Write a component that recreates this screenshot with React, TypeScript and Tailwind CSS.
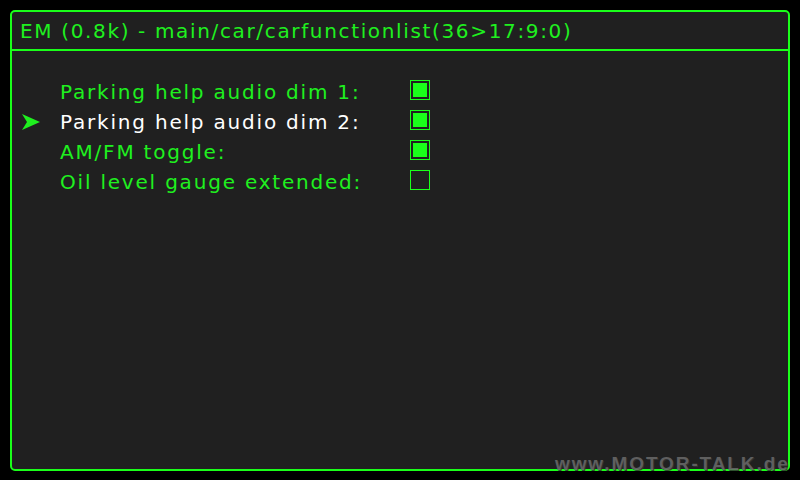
const items = [
  { label: "Parking help audio dim 1:", checked: true },
  { label: "Parking help audio dim 2:", checked: true, selected: true },
  { label: "AM/FM toggle:", checked: true },
  { label: "Oil level gauge extended:", checked: false },
];

const Arrow = () => (
  <svg width="18" height="16" viewBox="0 0 18 16">
    <path d="M0 0 L18 8 L0 16 L5 8 Z" fill="#1ff01f" />
  </svg>
);

const App = () => {
  return (
    <div
      className="relative w-[800px] h-[480px] bg-black p-[10px]"
      style={{ fontFamily: '"DejaVu Sans", sans-serif' }}
    >
      <div className="flex flex-col h-[461px] rounded-[5px] border-2 border-[#1aff1a] bg-[#202020]">
        <div className="h-[39px] flex items-center pl-[8px] border-b-2 border-[#1aff1a] text-[20px] text-[#1ff01f] tracking-[1.65px]">
          EM (0.8k) - main/car/carfunctionlist(36&gt;17:9:0)
        </div>

        <div className="pt-[24px] flex flex-col">
          {items.map((item) => (
            <div key={item.label} className="flex items-center h-[30px]">
              <div className="w-[48px] pl-[10px] pt-[4px] flex items-center">
                {item.selected && <Arrow />}
              </div>
              <div
                className={
                  item.selected
                    ? "w-[350px] pt-[4px] text-[20px] text-white tracking-[1.8px]"
                    : "w-[350px] pt-[4px] text-[20px] text-[#1ff01f] tracking-[1.8px]"
                }
              >
                {item.label}
              </div>
              <div className="w-5 h-5 border border-[#1aff1a] p-[2px]">
                {item.checked && <div className="w-full h-full bg-[#1aff1a]" />}
              </div>
            </div>
          ))}
        </div>
      </div>

      <div
        className="absolute left-[555px] top-[452px] text-[19px] font-bold text-[#6a6a6a] opacity-85 tracking-[1.9px] leading-[24px] [text-shadow:1px_1px_0_#333]"
        style={{ fontFamily: '"Liberation Sans", sans-serif' }}
      >
        www.MOTOR-TALK.de
      </div>
    </div>
  );
};

export default App;
